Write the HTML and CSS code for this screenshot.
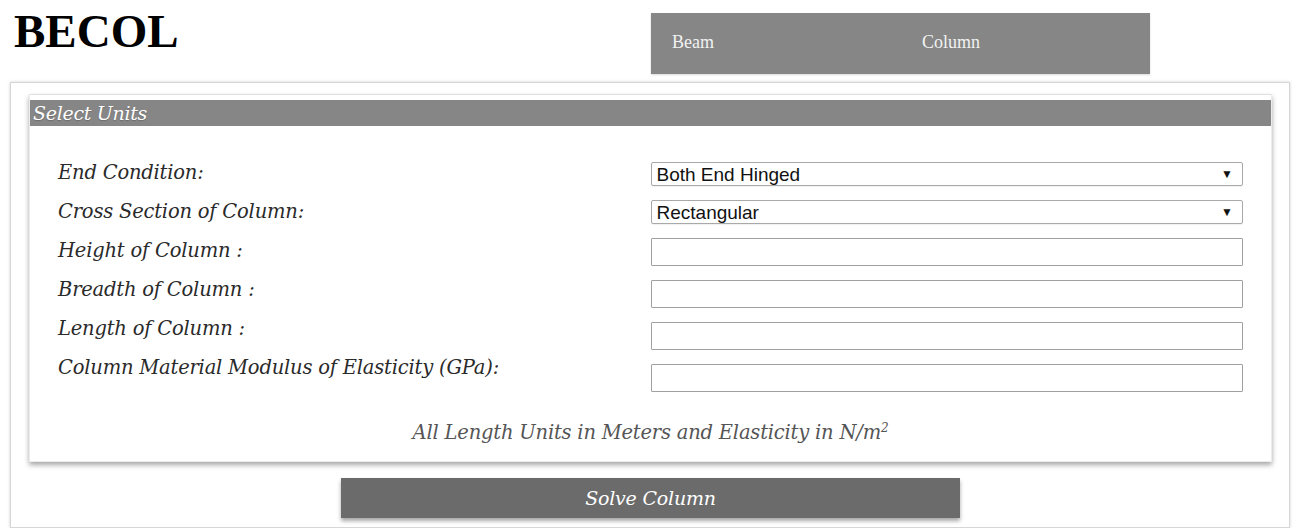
FILE: index.html
```html
<!DOCTYPE html>
<html lang="en">
<head>
<meta charset="utf-8">
<title>BECOL</title>
<link rel="stylesheet" href="styles.css">
</head>
<body>
<header class="top">
  <h1 class="brand">BECOL</h1>
  <nav class="tabs">
    <a class="tab" href="#beam">Beam</a>
    <a class="tab" href="#column">Column</a>
  </nav>
</header>

<main class="frame">
  <section class="card">
    <h2 class="card-title">Select Units</h2>
    <form class="form">
      <div class="labels">
        <label class="label" for="end">End Condition:</label>
        <label class="label" for="section">Cross Section of Column:</label>
        <label class="label" for="height">Height of Column :</label>
        <label class="label" for="breadth">Breadth of Column :</label>
        <label class="label" for="length">Length of Column :</label>
        <label class="label" for="modulus">Column Material Modulus of Elasticity (GPa):</label>
      </div>
      <div class="fields">
        <div class="select-wrap">
          <select class="select" id="end">
            <option>Both End Hinged</option>
            <option>Both End Fixed</option>
            <option>One End Fixed, Other Hinged</option>
            <option>One End Fixed, Other Free</option>
          </select>
          <span class="caret">&#9660;</span>
        </div>
        <div class="select-wrap">
          <select class="select" id="section">
            <option>Rectangular</option>
            <option>Circular</option>
          </select>
          <span class="caret">&#9660;</span>
        </div>
        <input class="text-input" id="height" type="text">
        <input class="text-input" id="breadth" type="text">
        <input class="text-input" id="length" type="text">
        <input class="text-input" id="modulus" type="text">
      </div>
    </form>
    <p class="note">All Length Units in Meters and Elasticity in N/m<sup>2</sup></p>
  </section>
  <button class="solve" type="button">Solve Column</button>
</main>
</body>
</html>
```

FILE: styles.css
```css
html, body {
  margin: 0;
  padding: 0;
  background: #ffffff;
}

body {
  font-family: "Liberation Serif", "Times New Roman", serif;
  color: #222;
}

/* ---------- top bar ---------- */
.top {
  display: grid;
  grid-template-columns: 651px 499px;
  height: 74px;
}

.brand {
  margin: 0;
  padding: 8px 0 0 14px;
  font-size: 47px;
  line-height: 47px;
  font-weight: bold;
  color: #000;
}

.tabs {
  margin-top: 13px;
  height: 61px;
  background: #868686;
  display: grid;
  grid-template-columns: 250px 249px;
  box-shadow: 0 1px 2px rgba(0, 0, 0, 0.15);
}

.tab {
  padding-left: 21px;
  line-height: 58px;
  font-size: 18px;
  color: #f2f2f2;
  text-decoration: none;
}

/* ---------- main frame ---------- */
.frame {
  display: block;
  margin: 8px 14px 0 10px;
  padding: 11px 17px 9px 18px;
  border: 1px solid #d6d6d6;
  box-shadow: 0 0 3px rgba(0, 0, 0, 0.18);
}

.card {
  background: #fff;
  padding-top: 5px;
  border: 1px solid #ececec;
  border-top-color: #e0e0e0;
  box-shadow: 0 3px 5px rgba(0, 0, 0, 0.35);
  height: 368px;
  box-sizing: border-box;
}

.card-title {
  margin: 0;
  height: 26px;
  line-height: 26px;
  padding-left: 3px;
  background: #868686;
  color: #fff;
  font-family: "DejaVu Serif", serif;
  font-style: italic;
  font-weight: normal;
  font-size: 19px;
  letter-spacing: -0.3px;
  text-shadow: 0 1px 1px rgba(0, 0, 0, 0.2);
}

/* ---------- form ---------- */
.form {
  display: grid;
  grid-template-columns: 1fr 1fr;
  padding: 27px 28px 0 28px;
}

.labels {
  display: flex;
  flex-direction: column;
}

.label {
  line-height: 39px;
  font-family: "DejaVu Serif", serif;
  font-style: italic;
  font-size: 19.5px;
  color: #2a2a2a;
  letter-spacing: -0.2px;
}

.fields {
  display: flex;
  flex-direction: column;
  gap: 14px;
  padding-top: 9px;
}

.select-wrap {
  position: relative;
  height: 24px;
}

.select {
  appearance: none;
  -webkit-appearance: none;
  width: 100%;
  height: 24px;
  margin: 0;
  padding: 0 0 0 5px;
  border: 1px solid #a9a9a9;
  border-radius: 2px;
  background: #fff;
  font-family: "Liberation Sans", Arial, sans-serif;
  font-size: 19px;
  color: #111;
  box-shadow: 0 1px 1px rgba(0, 0, 0, 0.06);
}

.caret {
  position: absolute;
  right: 10px;
  top: 6px;
  font-size: 12px;
  line-height: 12px;
  color: #111;
  pointer-events: none;
}

.text-input {
  display: block;
  box-sizing: border-box;
  width: 100%;
  height: 28px;
  margin: 0;
  border: 1px solid #a0a0a0;
  border-radius: 1px;
  background: #fff;
  font-family: "Liberation Sans", Arial, sans-serif;
  font-size: 16px;
}

.note {
  margin: 28px 0 0;
  text-align: center;
  font-family: "DejaVu Serif", serif;
  font-style: italic;
  font-size: 19.5px;
  line-height: 26px;
  color: #555;
  letter-spacing: -0.2px;
}

.note sup {
  font-size: 12px;
  line-height: 0;
}

/* ---------- action ---------- */
.solve {
  display: block;
  width: 619px;
  height: 40px;
  margin: 16px auto 0;
  border: none;
  background: #6b6b6b;
  color: #fff;
  font-family: "DejaVu Serif", serif;
  font-style: italic;
  font-size: 19px;
  letter-spacing: -0.2px;
  box-shadow: 0 3px 4px rgba(0, 0, 0, 0.35);
  cursor: pointer;
}
```
